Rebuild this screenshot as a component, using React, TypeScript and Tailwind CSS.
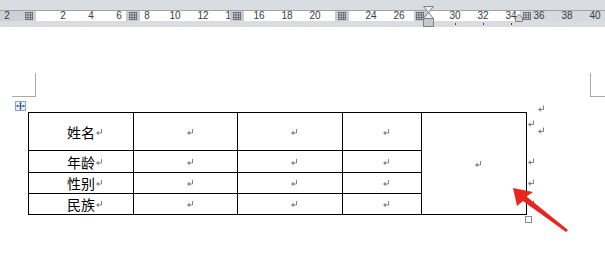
import React from "react";

const Mark = ({ className = "" }: { className?: string }) => (
  <svg width="7" height="7" viewBox="0 0 7 7" className={className}>
    <path d="M5.5 0.5 V4.5 H2" stroke="#808080" fill="none" strokeWidth="1" />
    <polygon points="0,4.5 2.6,2.2 2.6,6.8" fill="#808080" />
  </svg>
);

const GridIcon = ({ className = "" }: { className?: string }) => (
  <svg width="8" height="8" viewBox="0 0 8 8" className={className}>
    <g stroke="#6f7379" strokeWidth="1" fill="none">
      <path d="M0.5 0 V8 M3 0 V8 M5.5 0 V8 M7.5 0 V8" />
      <path d="M0 0.5 H8 M0 3 H8 M0 5.5 H8 M0 7.5 H8" />
    </g>
  </svg>
);

const Num = ({ n }: { n: string }) => (
  <span className="w-[28px] shrink-0 text-center">{n}</span>
);

const Marker = ({ w }: { w: string }) => (
  <div className={`${w} shrink-0 h-full bg-[#c8ccd1] flex items-center justify-center`}>
    <GridIcon />
  </div>
);

const Cell = ({ text = "", className = "" }: { text?: string; className?: string }) => (
  <div className={`bg-white flex items-center justify-center ${className}`}>
    <span className="relative leading-none">
      {text}
      <Mark className="absolute left-full ml-[1px] top-1/2 -translate-y-1/2" />
    </span>
  </div>
);

export default function App() {
  const labels = ["姓名", "年龄", "性别", "民族"];
  return (
    <div
      className="w-[605px] h-[272px] overflow-hidden bg-white"
      style={{ fontFamily: '"Liberation Sans", Arial, sans-serif' }}
    >
      {/* Ruler */}
      <div className="relative h-[27px] flex flex-col bg-[#d9dce1]">
        <div className="h-[10px] shrink-0" />
        <div className="h-[11px] shrink-0 border-t border-[#9ea3a9] flex text-[10px] leading-[10px] text-[#3a3a3a]">
          <div className="w-[36px] shrink-0 h-full bg-[#cdd1d6] flex items-center">
            <span className="-ml-[7px] w-[28px] shrink-0 text-center">2</span>
            <GridIcon className="ml-[4px] shrink-0" />
          </div>
          <div className="w-[90px] shrink-0 h-full bg-white flex items-center pl-[13px]">
            <Num n="2" />
            <Num n="4" />
            <Num n="6" />
          </div>
          <Marker w="w-[14px]" />
          <div className="w-[90px] shrink-0 h-full bg-white flex items-center">
            <div className="-ml-[7px] flex">
              <Num n="8" />
              <Num n="10" />
              <Num n="12" />
              <Num n="14" />
            </div>
          </div>
          <Marker w="w-[14px]" />
          <div className="w-[91px] shrink-0 h-full bg-white flex items-center pl-[1px]">
            <Num n="16" />
            <Num n="18" />
            <Num n="20" />
          </div>
          <Marker w="w-[14px]" />
          <div className="w-[65px] shrink-0 h-full bg-white flex items-center pl-[8px]">
            <Num n="24" />
            <Num n="26" />
          </div>
          <div className="w-[16px] shrink-0 h-full bg-[#c8ccd1] flex items-center">
            <GridIcon className="ml-[2px]" />
          </div>
          <div className="w-[90px] shrink-0 h-full bg-white flex items-center pl-[11px]">
            <Num n="30" />
            <Num n="32" />
            <Num n="34" />
          </div>
          <div className="w-[85px] shrink-0 h-full bg-[#d6d9de] flex items-center">
            <GridIcon className="ml-[3px] shrink-0" />
            <div className="-ml-[6px] flex">
              <Num n="36" />
              <Num n="38" />
              <Num n="40" />
            </div>
          </div>
        </div>
        <div className="h-[6px] shrink-0 flex items-start pt-[2px]">
          <div className="ml-[455px] w-px h-[2px] bg-[#444]" />
          <div className="ml-[27px] w-px h-[2px] bg-[#444]" />
          <div className="ml-[27px] w-px h-[2px] bg-[#444]" />
        </div>
        {/* indent slider */}
        <svg className="absolute left-[423px] top-[6px]" width="11" height="21" viewBox="0 0 11 21">
          <path d="M0.5 0.5 H10.5 L5.5 6.5 Z" fill="#eeeeee" stroke="#7d8187" />
          <path d="M5.5 6.5 L10.5 12.5 H0.5 Z" fill="#eeeeee" stroke="#7d8187" />
          <rect x="0.5" y="12.5" width="10" height="8" fill="#c9c9c9" stroke="#7d8187" />
        </svg>
        {/* right indent */}
        <svg className="absolute left-[515px] top-[14px]" width="8" height="8" viewBox="0 0 8 8">
          <path d="M4 0.5 L7.5 4 V7.5 H0.5 V4 Z" fill="#d8d8d8" stroke="#7d8187" />
        </svg>
      </div>

      {/* Page */}
      <div className="flex flex-col pt-[46px]">
        <div className="flex justify-between h-[24px]">
          <div className="ml-[12px] w-[24px] h-[24px] border-r border-b border-[#a9a9a9]" />
          <div className="w-[15px] h-[24px] border-l border-b border-[#a9a9a9]" />
        </div>
        <div className="relative ml-[28px] mt-[15px] w-[499px]">
          {/* move handle */}
          <div className="absolute left-[-13px] top-[-11px] w-[11px] h-[10px] border border-[#8aa2c0] bg-[#eef3fa] flex items-center justify-center">
            <svg width="9" height="8" viewBox="0 0 9 8">
              <g fill="#2d5591">
                <rect x="4" y="1" width="1" height="6" />
                <rect x="1" y="3.5" width="7" height="1" />
                <polygon points="4.5,0 6,1.6 3,1.6" />
                <polygon points="4.5,8 6,6.4 3,6.4" />
                <polygon points="0,4 1.6,2.5 1.6,5.5" />
                <polygon points="9,4 7.4,2.5 7.4,5.5" />
              </g>
            </svg>
          </div>
          <div
            className="grid grid-cols-[104px_103px_104px_78px_104px] grid-rows-[37px_21px_20px_20px] gap-px bg-black p-px text-[14px] text-black"
            style={{ fontFamily: '"Noto Sans CJK SC", "Noto Sans", sans-serif' }}
          >
            {labels.map((l, i) => (
              <React.Fragment key={l}>
                <Cell text={l} />
                <Cell />
                <Cell />
                <Cell />
                {i === 0 && <Cell className="row-span-4" />}
              </React.Fragment>
            ))}
          </div>
          {/* end-of-row marks */}
          <Mark className="absolute left-[510px] top-[-7px]" />
          <Mark className="absolute left-[500px] top-[8px]" />
          <Mark className="absolute left-[510px] top-[15px]" />
          <Mark className="absolute left-[500px] top-[46px]" />
          <Mark className="absolute left-[500px] top-[67px]" />
          <Mark className="absolute left-[500px] top-[88px]" />
          {/* resize handle */}
          <div className="absolute left-[497px] top-[104px] w-[7px] h-[7px] border border-[#8a8a8a] bg-white" />
          {/* red arrow */}
          <svg className="absolute left-[482px] top-[73px]" width="60" height="50" viewBox="0 0 60 50">
            <polygon
              points="3,3 7,21 13,16 56,47 58,45 16.5,11.5 23,7"
              fill="#e8261f"
            />
          </svg>
        </div>
      </div>
    </div>
  );
}
